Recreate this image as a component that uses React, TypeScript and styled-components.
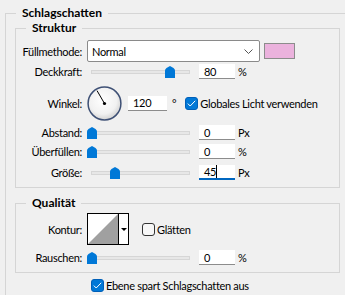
import React from 'react'
import styled, { createGlobalStyle } from 'styled-components'

// Grundstil: Windows-Dialogfläche
const GlobalStyle = createGlobalStyle`
  *, *::before, *::after { box-sizing: border-box; }
  html, body { margin: 0; padding: 0; background: #f0f0f0; overflow: hidden; }
  body {
    font-family: Lato, "Liberation Sans", Arial, sans-serif;
    font-size: 11px;
    letter-spacing: -0.3px;
    color: #000;
  }
`

const Page = styled.div`
  width: 345px;
  height: 295px;
  overflow: hidden;
  padding: 13px 0 0 5px;
`

// Gruppenrahmen mit Titel auf der oberen Kante
const Group = styled.div<{ $mt?: number; $pt: number; $pb: number }>`
  position: relative;
  width: 325px;
  margin-top: ${(p) => p.$mt ?? 0}px;
  padding: ${(p) => p.$pt}px 0 ${(p) => p.$pb}px 0;
  border: 1px solid #d5d5d5;
`

const OuterGroup = styled(Group)`
  width: 380px;
  padding-left: 9px;
`

const Title = styled.div<{ $lh: number }>`
  position: absolute;
  left: 10px;
  top: ${(p) => -Math.ceil(p.$lh / 2) - 1}px;
  padding: 0 6px;
  background: #f0f0f0;
  font-size: 12px;
  font-weight: bold;
  letter-spacing: 0;
  line-height: ${(p) => p.$lh}px;
`

const Row = styled.div<{ $h: number; $mt?: number; $ml?: number }>`
  display: flex;
  align-items: center;
  height: ${(p) => p.$h}px;
  margin-top: ${(p) => p.$mt ?? 0}px;
  margin-left: ${(p) => p.$ml ?? 0}px;
  white-space: nowrap;
`

const Label = styled.div`
  flex: none;
  width: 66px;
  margin-right: 5px;
  text-align: right;
`

// Dropdown Füllmethode
const Select = styled.div`
  flex: none;
  display: flex;
  align-items: center;
  justify-content: space-between;
  width: 173px;
  height: 22px;
  padding: 0 6px 0 4px;
  background: #fff;
  border: 1px solid #8a8a8a;
  border-radius: 2px;
`

const Swatch = styled.div<{ $color: string }>`
  flex: none;
  width: 31px;
  height: 16px;
  margin-left: 4px;
  background: ${(p) => p.$color};
  border: 1px solid #8c8c8c;
`

// Schieberegler
const SliderBox = styled.div`
  position: relative;
  flex: none;
  width: 108px;
  height: 15px;
  display: flex;
  align-items: center;
  padding: 0 5px 0 4px;
`

const Track = styled.div`
  flex: 1;
  height: 4px;
  margin-top: 1px;
  background: #e7e7e7;
  border: 1px solid #d6d6d6;
`

const Thumb = styled.svg`
  position: absolute;
  top: 2px;
`

const Field = styled.div<{ $w?: number; $focused?: boolean }>`
  flex: none;
  display: flex;
  align-items: center;
  width: ${(p) => p.$w ?? 36}px;
  height: 15px;
  margin-left: 4px;
  padding-left: 5px;
  background: #fff;
  border-bottom: ${(p) => (p.$focused ? '2px solid #0067c0' : '1px solid #8c8c8c')};
`

const Caret = styled.span`
  display: inline-block;
  width: 1px;
  height: 13px;
  background: #000;
`

const Unit = styled.span<{ $ml?: number }>`
  margin-left: ${(p) => p.$ml ?? 3}px;
`

const DialWrap = styled.div`
  flex: none;
  width: 35px;
  height: 35px;
  margin-right: 2px;
`

const CheckBox = styled.div<{ $checked?: boolean; $ml?: number }>`
  flex: none;
  display: flex;
  align-items: center;
  justify-content: center;
  width: 13px;
  height: 13px;
  margin-left: ${(p) => p.$ml ?? 0}px;
  margin-right: 2px;
  border-radius: 3px;
  background: ${(p) => (p.$checked ? '#0078d7' : '#f7f7f7')};
  border: 1px solid ${(p) => (p.$checked ? '#005fb8' : '#333')};
`

// Konturvorschau
const ContourBox = styled.div`
  flex: none;
  display: flex;
  width: 42px;
  height: 32px;
  background: #fff;
  border: 1px solid #000;
`

const ContourDrop = styled.div`
  flex: 1;
  display: flex;
  align-items: center;
  justify-content: center;
  border-left: 1px solid #000;

  &::after {
    content: '';
    border-left: 3px solid transparent;
    border-right: 3px solid transparent;
    border-top: 3px solid #000;
  }
`

const SliderThumb: React.FC<{ left: number }> = ({ left }) => (
  <Thumb width="10" height="12" viewBox="0 0 10 12" style={{ left }}>
    <path d="M0 4.5 Q0 3 1.5 2 L5 0 L8.5 2 Q10 3 10 4.5 V12 H0 Z" fill="#0078d7" />
  </Thumb>
)

const Slider: React.FC<{ pos: number }> = ({ pos }) => (
  <SliderBox>
    <Track />
    <SliderThumb left={pos} />
  </SliderBox>
)

const Check = () => (
  <svg width="9" height="7" viewBox="0 0 9 7">
    <polyline points="0.8,3.6 3.2,6 8.2,0.8" fill="none" stroke="#fff" strokeWidth="1" />
  </svg>
)

const Dial = () => (
  <DialWrap>
    <svg width="35" height="35" viewBox="0 0 35 35">
      <defs>
        <radialGradient id="dialFill" cx="45%" cy="40%" r="60%">
          <stop offset="0" stopColor="#ffffff" />
          <stop offset="0.7" stopColor="#f1f1f1" />
          <stop offset="1" stopColor="#d3d3d3" />
        </radialGradient>
      </defs>
      <circle cx="17.5" cy="17.5" r="16.4" fill="url(#dialFill)" stroke="#3e5075" strokeWidth="1.5" />
      <line x1="17.5" y1="17.5" x2="10" y2="4.6" stroke="#000" strokeWidth="1" />
      <circle cx="17.5" cy="17.5" r="1.6" fill="#000" />
    </svg>
  </DialWrap>
)

const sliderRows = [
  { label: 'Abstand:', pos: 0, value: '0', unit: 'Px', mt: 5 },
  { label: 'Überfüllen:', pos: 0, value: '0', unit: '%', mt: 4 },
]

export default function App() {
  return (
    <>
      <GlobalStyle />
      <Page>
        <OuterGroup $pt={14} $pb={40}>
          <Title $lh={14}>Schlagschatten</Title>

          {/* Struktur */}
          <Group $pt={11} $pb={7}>
            <Title $lh={16}>Struktur</Title>
            <Row $h={22}>
              <Label>Füllmethode:</Label>
              <Select>
                <span>Normal</span>
                <svg width="9" height="5" viewBox="0 0 9 5">
                  <polyline points="0.5,0.5 4.5,4.5 8.5,0.5" fill="none" stroke="#555" strokeWidth="1" />
                </svg>
              </Select>
              <Swatch $color="#ebb2dd" />
            </Row>
            <Row $h={15} $mt={2}>
              <Label>Deckkraft:</Label>
              <Slider pos={78} />
              <Field>80</Field>
              <Unit>%</Unit>
            </Row>
            <Row $h={34} $mt={7}>
              <Label>Winkel:</Label>
              <Dial />
              <Field $w={39}>120</Field>
              <Unit $ml={5}>°</Unit>
              <CheckBox $checked $ml={9}>
                <Check />
              </CheckBox>
              <span>Globales Licht verwenden</span>
            </Row>
            {sliderRows.map((r) => (
              <Row key={r.label} $h={15} $mt={r.mt}>
                <Label>{r.label}</Label>
                <Slider pos={r.pos} />
                <Field>{r.value}</Field>
                <Unit>{r.unit}</Unit>
              </Row>
            ))}
            <Row $h={15} $mt={6}>
              <Label>Größe:</Label>
              <Slider pos={23} />
              <Field $focused>
                45
                <Caret />
              </Field>
              <Unit>Px</Unit>
            </Row>
          </Group>

          {/* Qualität */}
          <Group $mt={15} $pt={9} $pb={7}>
            <Title $lh={16}>Qualität</Title>
            <Row $h={32}>
              <Label>Kontur:</Label>
              <ContourBox>
                <svg width="30" height="30" viewBox="0 0 30 30">
                  <polygon points="0,30 30,0 30,30" fill="#a0a0a0" />
                </svg>
                <ContourDrop />
              </ContourBox>
              <CheckBox $ml={13} />
              <span>Glätten</span>
            </Row>
            <Row $h={15} $mt={5}>
              <Label>Rauschen:</Label>
              <Slider pos={0} />
              <Field>0</Field>
              <Unit>%</Unit>
            </Row>
          </Group>

          <Row $h={13} $mt={6} $ml={76}>
            <CheckBox $checked>
              <Check />
            </CheckBox>
            <span>Ebene spart Schlagschatten aus</span>
          </Row>
        </OuterGroup>
      </Page>
    </>
  )
}
